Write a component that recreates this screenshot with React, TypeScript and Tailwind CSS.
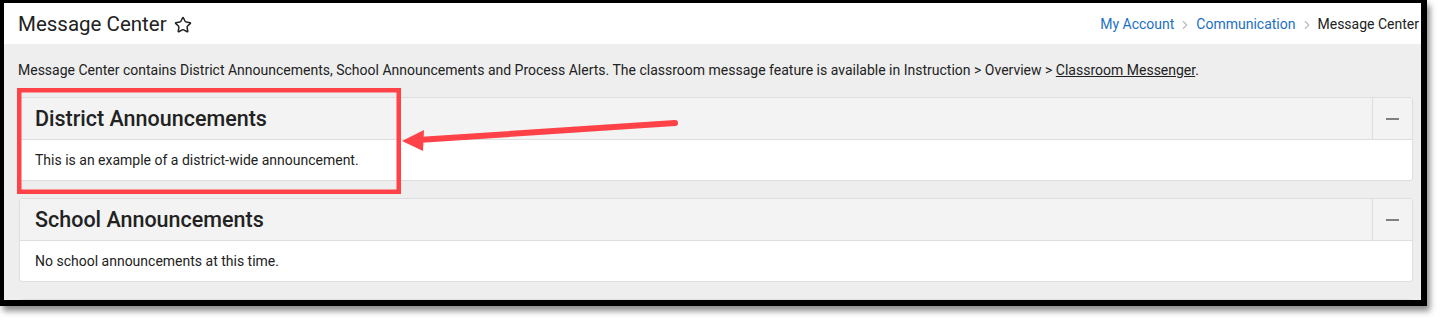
import { ChevronRight, Star } from "lucide-react";

const CRUMBS = ["My Account", "Communication"];

function Panel({ title, body }: { title: string; body: string }) {
  return (
    <div className="w-[1394px] rounded-[3px] border border-[#dedede] bg-white overflow-hidden">
      <div className="flex h-[42px] items-stretch bg-[#f3f3f3] border-b border-[#dedede]">
        <h2 className="flex-1 flex items-center pl-[15px] pt-[1px] text-[21.5px] font-medium text-[#222]">
          {title}
        </h2>
        <button className="w-[40px] flex items-center justify-center border-l border-[#dedede]">
          <span className="block w-[13px] h-[2px] bg-[#808080]" />
        </button>
      </div>
      <div className="h-[40px] flex items-center pl-[15px] text-[14px] text-[#222]">
        {body}
      </div>
    </div>
  );
}

export default function App() {
  return (
    <div
      className="relative w-[1440px] h-[321px] bg-white overflow-hidden"
      style={{ fontFamily: "Roboto, 'Noto Sans', sans-serif" }}
    >
      <div className="w-[1427px] h-[306px] border-t-[3px] border-l-[4px] border-r-[6px] border-b-[6px] border-black bg-[#eeeeee] shadow-[3px_5px_6px_rgba(0,0,0,0.45)] overflow-hidden">
        <div className="flex h-[41px] items-center justify-between bg-white pl-[14px] pr-[2px] pt-[2px]">
          <div className="flex items-center gap-[7px]">
            <h1 className="text-[20.5px] text-[#222] leading-none">Message Center</h1>
            <Star size={18} strokeWidth={2} className="text-[#222]" />
          </div>
          <nav className="flex items-center text-[14px]">
            {CRUMBS.map((c) => (
              <span key={c} className="flex items-center">
                <span className="text-[#1b6fc6]">{c}</span>
                <ChevronRight size={14} strokeWidth={2} className="mx-[4px] text-[#bdbdbd]" />
              </span>
            ))}
            <span className="text-[#222]">Message Center</span>
          </nav>
        </div>

        <div className="pl-[14px] pt-[17px]">
          <p className="text-[14px] leading-[18px] text-[#222]">
            Message Center contains District Announcements, School Announcements and Process Alerts.
            The classroom message feature is available in Instruction &gt; Overview &gt;{" "}
            <span className="underline">Classroom Messenger</span>.
          </p>
          <div className="mt-[18px] ml-[1px] flex flex-col gap-[17px]">
            <Panel
              title="District Announcements"
              body="This is an example of a district-wide announcement."
            />
            <Panel
              title="School Announcements"
              body="No school announcements at this time."
            />
            <div className="w-[1394px] h-[40px] rounded-[3px] border border-[#dedede] bg-[#f3f3f3]" />
          </div>
        </div>
      </div>

      {/* annotation overlay */}
      <svg
        className="absolute left-0 top-0 pointer-events-none"
        width="1440"
        height="321"
        viewBox="0 0 1440 321"
      >
        <rect
          x="19.25"
          y="90.25"
          width="379.5"
          height="101.5"
          fill="none"
          stroke="#ff4248"
          strokeWidth="4.5"
        />
        <line
          x1="675"
          y1="123"
          x2="418"
          y2="140"
          stroke="#ff4248"
          strokeWidth="6"
          strokeLinecap="round"
        />
        <polygon points="402,141 424,130 423,151" fill="#ff4248" />
      </svg>
    </div>
  );
}
